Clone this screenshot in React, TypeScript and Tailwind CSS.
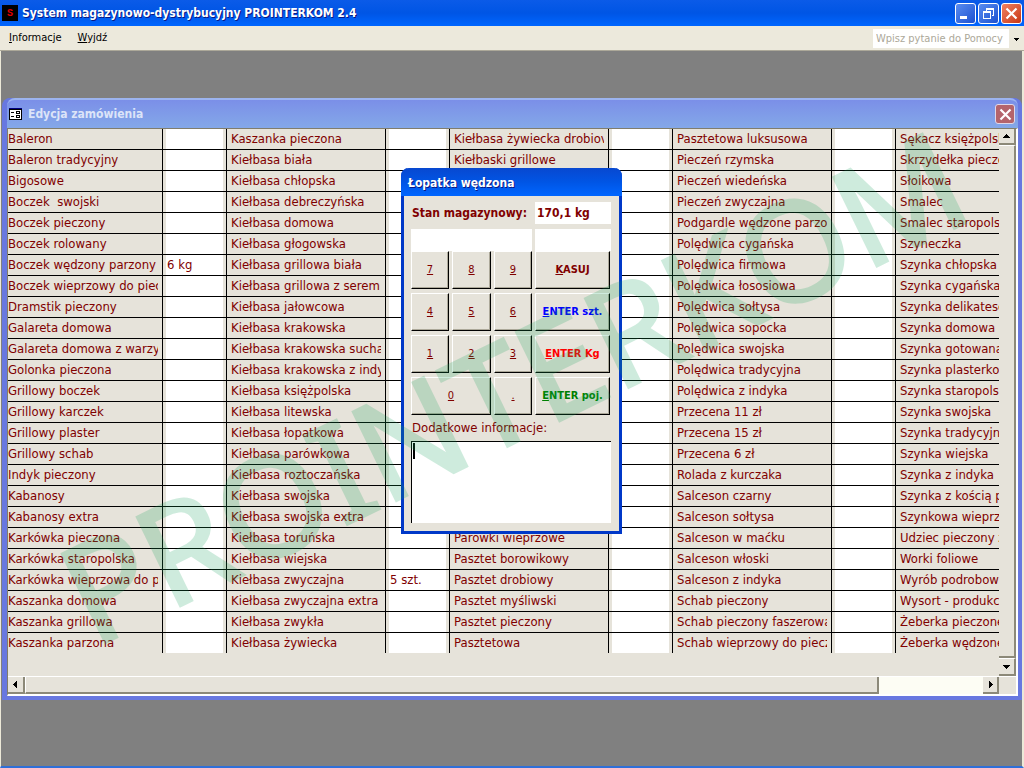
import { useState } from 'react'

const PRODUCTS = [
  ['Baleron', 'Baleron tradycyjny', 'Bigosowe', 'Boczek  swojski', 'Boczek pieczony', 'Boczek rolowany', 'Boczek wędzony parzony', 'Boczek wieprzowy do piec', 'Dramstik pieczony', 'Galareta domowa', 'Galareta domowa z warzy', 'Golonka pieczona', 'Grillowy boczek', 'Grillowy karczek', 'Grillowy plaster', 'Grillowy schab', 'Indyk pieczony', 'Kabanosy', 'Kabanosy extra', 'Karkówka pieczona', 'Karkówka staropolska', 'Karkówka wieprzowa do p', 'Kaszanka domowa', 'Kaszanka grillowa', 'Kaszanka parzona'],
  ['Kaszanka pieczona', 'Kiełbasa biała', 'Kiełbasa chłopska', 'Kiełbasa debreczyńska', 'Kiełbasa domowa', 'Kiełbasa głogowska', 'Kiełbasa grillowa biała', 'Kiełbasa grillowa z serem', 'Kiełbasa jałowcowa', 'Kiełbasa krakowska', 'Kiełbasa krakowska sucha', 'Kiełbasa krakowska z indy', 'Kiełbasa księżpolska', 'Kiełbasa litewska', 'Kiełbasa łopatkowa', 'Kiełbasa parówkowa', 'Kiełbasa roztoczańska', 'Kiełbasa swojska', 'Kiełbasa swojska extra', 'Kiełbasa toruńska', 'Kiełbasa wiejska', 'Kiełbasa zwyczajna', 'Kiełbasa zwyczajna extra', 'Kiełbasa zwykła', 'Kiełbasa żywiecka'],
  ['Kiełbasa żywiecka drobiov', 'Kiełbaski grillowe', '', '', '', '', '', '', '', '', '', '', '', '', '', '', '', '', '', 'Parówki wieprzowe', 'Pasztet borowikowy', 'Pasztet drobiowy', 'Pasztet myśliwski', 'Pasztet pieczony', 'Pasztetowa'],
  ['Pasztetowa luksusowa', 'Pieczeń rzymska', 'Pieczeń wiedeńska', 'Pieczeń zwyczajna', 'Podgardle wędzone parzo', 'Polędwica cygańska', 'Polędwica firmowa', 'Polędwica łososiowa', 'Polędwica sołtysa', 'Polędwica sopocka', 'Polędwica swojska', 'Polędwica tradycyjna', 'Polędwica z indyka', 'Przecena 11 zł', 'Przecena 15 zł', 'Przecena 6 zł', 'Rolada z kurczaka', 'Salceson czarny', 'Salceson sołtysa', 'Salceson w maćku', 'Salceson włoski', 'Salceson z indyka', 'Schab pieczony', 'Schab pieczony faszerowa', 'Schab wieprzowy do piecz'],
  ['Sękacz księżpolsk', 'Skrzydełka pieczo', 'Słoikowa', 'Smalec', 'Smalec staropols', 'Szyneczka', 'Szynka chłopska', 'Szynka cygańska', 'Szynka delikatesc', 'Szynka domowa', 'Szynka gotowana', 'Szynka plasterkov', 'Szynka staropolsk', 'Szynka swojska', 'Szynka tradycyjna', 'Szynka wiejska', 'Szynka z indyka', 'Szynka z kością p', 'Szynkowa wieprz', 'Udziec pieczony z', 'Worki foliowe', 'Wyrób podrobow', 'Wysort - produkc', 'Żeberka pieczone', 'Żeberka wędzone'],
]

const AMOUNTS: Record<string, string> = {
  'Boczek wędzony parzony': '6 kg',
  'Kiełbasa zwyczajna': '5 szt.',
}

const ROWS = PRODUCTS[0].map((_, i) => PRODUCTS.map((column) => column[i]))

const KEY =
  'flex items-center justify-center border border-t-white border-l-white border-r-black border-b-black bg-[#e6e3da] shadow-[inset_-1px_-1px_#aca899]'

function Arrow({ d }: { d: string }) {
  return (
    <svg width="9" height="9" viewBox="0 0 9 9" shapeRendering="crispEdges" aria-hidden="true">
      <path d={d} />
    </svg>
  )
}

function CloseIcon() {
  return (
    <svg width="13" height="13" viewBox="0 0 13 13" aria-hidden="true">
      <path d="M1.500 1.500l10 10M11.500 1.500l-10 10" stroke="#fff" strokeWidth="2.2" />
    </svg>
  )
}

function TitleBar() {
  const button =
    'flex size-[21px] items-center justify-center rounded-[3px] border border-white bg-linear-to-br from-[#5a8cf0] to-[#1c50d0]'
  return (
    <header className="flex h-[26px] shrink-0 items-center bg-linear-to-b from-[#0b5be8] via-[#0055e5] to-[#0066ff] px-[2px]">
      <span className="flex size-4 items-center justify-center bg-black font-['Liberation_Mono'] text-[10px] font-bold text-[#e00000]">
        S
      </span>
      <h1 className="ml-1 flex-1 text-[12px] font-bold text-white [text-shadow:1px_1px_#0a1883]">
        System magazynowo-dystrybucyjny PROINTERKOM 2.4
      </h1>
      <div className="flex gap-[2px]">
        <button className={button} aria-label="Minimalizuj">
          <svg width="13" height="13" viewBox="0 0 13 13" aria-hidden="true">
            <path d="M1 9h7v3H1z" fill="#fff" />
          </svg>
        </button>
        <button className={button} aria-label="Przywróć">
          <svg width="13" height="13" viewBox="0 0 13 13" fill="none" stroke="#fff" shapeRendering="crispEdges" aria-hidden="true">
            <path d="M4.500 4V2.500h7v6H10M4 1.500h8M1.500 5.500h7v6h-7zM1 4.500h8" />
          </svg>
        </button>
        <button
          className="flex size-[21px] items-center justify-center rounded-[3px] border border-white bg-linear-to-br from-[#f08060] to-[#c8340c]"
          aria-label="Zamknij"
        >
          <CloseIcon />
        </button>
      </div>
    </header>
  )
}

function MenuBar() {
  return (
    <nav className="flex h-[25px] shrink-0 items-center border-b border-[#aca899] bg-[#ece9dc] pl-[9px] text-[11px]">
      <a href="#info">
        <u>I</u>nformacje
      </a>
      <a href="#exit" className="ml-4 flex-1">
        <u>W</u>yjdź
      </a>
      <input
        className="h-[19px] w-[136px] bg-white px-[3px] placeholder:text-[#aca899]"
        placeholder="Wpisz pytanie do Pomocy"
        aria-label="Pytanie do Pomocy"
      />
      <button className="flex h-[19px] w-[15px] items-center justify-center" aria-label="Rozwiń">
        <Arrow d="M2 4h5v1H6v1H5v1H4V6H3V5H2z" />
      </button>
    </nav>
  )
}

function ProductTable() {
  return (
    <table className="w-full table-fixed border-separate border-spacing-0 text-[13px] leading-5 text-[#800000]">
      <colgroup>
        {PRODUCTS.map((_, i) => [
          <col key={`n${i}`} className={i === 0 ? 'w-[154px]' : i === 4 ? '' : 'w-[159px]'} />,
          i < 4 && <col key={`a${i}`} className="w-[64px]" />,
        ])}
      </colgroup>
      <tbody>
        {ROWS.map((row, r) => (
          <tr key={r} className="*:border-b *:border-black last:*:border-b-0">
            {row.map((name, c) => [
              <td key={`n${c}`} className={c === 0 ? 'p-0' : 'border-l p-0 pl-1'}>
                <div className={c === 4 ? 'h-5 overflow-hidden whitespace-pre' : 'h-5 w-[150px] overflow-hidden whitespace-pre'}>
                  {name}
                </div>
              </td>,
              c < 4 && (
                <td key={`a${c}`} className="border-l p-0 px-[3px]">
                  <input
                    className="block h-5 w-full bg-white pl-px"
                    defaultValue={AMOUNTS[name] ?? ''}
                    aria-label={`Ilość ${name}`}
                  />
                </td>
              ),
            ])}
          </tr>
        ))}
      </tbody>
    </table>
  )
}

function OrderWindow() {
  const scroll = 'flex shrink-0 items-center justify-center border-r-2 border-b-2 border-[#8c8979] bg-[#e6e3da]'
  return (
    <section className="mt-[47px] ml-px rounded-t-lg border-r-4 border-b-4 border-l-[5px] border-[#6878e0] bg-[#6878e0]">
      <header className="flex h-[30px] items-center rounded-t-lg border-t-2 border-[#9cb4f0] bg-linear-to-b from-[#7b8fe8] to-[#84a8e8] pr-[3px] pl-[2px]">
        <svg width="13" height="12" viewBox="0 0 13 12" shapeRendering="crispEdges" aria-hidden="true">
          <path d="M0 0h13v12H0z" />
          <path d="M1 2h11v9H1z" fill="#fff" />
          <path d="M2 4h3v1H2zM2 8h3v1H2zM7 3h4v3H7zM7 7h4v3H7z" />
          <path d="M8 4h2v1H8zM8 8h2v1H8z" fill="#fff" />
          <path d="M0 0h13v1H0z" fill="#000080" />
        </svg>
        <h2 className="ml-[6px] flex-1 text-[12px] font-bold text-[#dce4f8]">Edycja zamówienia</h2>
        <button
          className="flex size-5 items-center justify-center rounded-[3px] border border-[#e0d8e8] bg-[#b4646c]"
          aria-label="Zamknij okno"
        >
          <CloseIcon />
        </button>
      </header>
      <div className="border-t border-r-2 border-b-2 border-l border-[#807d6c] border-r-white border-b-white bg-[#e6e3da]">
        <div className="flex">
          <div className="min-w-0 flex-1 pb-[23px]">
            <ProductTable />
          </div>
          <div className="flex w-[17px] flex-col">
            <button className={`${scroll} h-4`} aria-label="W górę">
              <Arrow d="M4 2h1v1h1v1h1v1h1v1H1V5h1V4h1V3h1z" />
            </button>
            <div className={`${scroll} flex-1 border-t border-t-white`} />
            <button className={`${scroll} h-[18px] border-t border-t-white`} aria-label="W dół">
              <Arrow d="M1 3h7v1H7v1H6v1H5v1H4V6H3V5H2V4H1z" />
            </button>
          </div>
        </div>
        <div className="flex h-[18px] border-t border-white pr-[17px]">
          <button className={`${scroll} w-[17px]`} aria-label="W lewo">
            <Arrow d="M6 1v7H5V7H4V6H3V5H2V4h1V3h1V2h1V1z" />
          </button>
          <div className={`${scroll} flex-1 border-l border-l-white`} />
          <div className="w-[104px] bg-[#fdfdf4]" />
          <button className={`${scroll} w-4`} aria-label="W prawo">
            <Arrow d="M3 1v7h1V7h1V6h1V5h1V4H6V3H5V2H4V1z" />
          </button>
        </div>
      </div>
    </section>
  )
}

function Digit({ value, wide, onPress }: { value: string; wide?: boolean; onPress: (v: string) => void }) {
  return (
    <button className={wide ? `${KEY} col-span-2` : KEY} onClick={() => onPress(value)}>
      <u>{value}</u>
    </button>
  )
}

function StockDialog() {
  const [amount, setAmount] = useState('')
  const press = (v: string) => setAmount(amount + v)

  return (
    <section
      role="dialog"
      aria-label="Łopatka wędzona"
      className="absolute top-[168px] left-[401px] w-[221px] rounded-t-lg border-x-[3px] border-b-[3px] border-[#0038c8] bg-[#e6e3da] text-[#800000]"
    >
      <h2 className="-mx-[3px] h-7 rounded-t-lg bg-linear-to-b from-[#0848d0] via-[#0055e5] to-[#0066ff] pl-[7px] text-[12px] leading-[30px] font-bold text-white [text-shadow:1px_1px_#0a1883]">
        Łopatka wędzona
      </h2>
      <div className="pt-[6px] pr-2 pb-2 pl-[7px]">
        <div className="flex h-[22px] items-center text-[12px] font-bold">
          <label htmlFor="stock" className="flex-1 pl-px whitespace-nowrap">
            Stan magazynowy:
          </label>
          <input id="stock" className="h-full w-[76px] bg-white pl-[2px]" defaultValue="170,1 kg" />
        </div>
        <div className="mt-[5px] flex h-[22px] gap-[3px]">
          <input className="min-w-0 flex-1 bg-white pl-1" value={amount} readOnly aria-label="Ilość" />
          <input className="w-[76px] bg-white pl-1" aria-label="Jednostka" />
        </div>
        <div className="grid auto-rows-[38px] grid-cols-[38px_39px_38px_75px] gap-x-[3px] gap-y-1 text-[11px]">
          <Digit value="7" onPress={press} />
          <Digit value="8" onPress={press} />
          <Digit value="9" onPress={press} />
          <button className={`${KEY} font-bold`} onClick={() => setAmount('')}>
            <u>K</u>ASUJ
          </button>
          <Digit value="4" onPress={press} />
          <Digit value="5" onPress={press} />
          <Digit value="6" onPress={press} />
          <button className={`${KEY} font-bold text-[#0000ff]`}>
            <u>E</u>NTER szt.
          </button>
          <Digit value="1" onPress={press} />
          <Digit value="2" onPress={press} />
          <Digit value="3" onPress={press} />
          <button className={`${KEY} font-bold text-[#ff0000]`}>
            <u>E</u>NTER Kg
          </button>
          <Digit value="0" wide onPress={press} />
          <Digit value="." onPress={press} />
          <button className={`${KEY} font-bold text-[#008000]`}>
            <u>E</u>NTER poj.
          </button>
        </div>
        <label htmlFor="notes" className="mt-[3px] block pl-px text-[13px] leading-5">
          Dodatkowe informacje:
        </label>
        <div className="mt-[3px] flex border-t border-l border-black bg-white pt-px pl-px">
          <span className="h-4 w-[2px] bg-black" />
          <textarea id="notes" className="block h-20 min-w-0 flex-1 resize-none" />
        </div>
      </div>
    </section>
  )
}

export default function App() {
  return (
    <div className="relative flex min-h-screen flex-col overflow-hidden bg-[#808080] font-['DejaVu_Sans_Condensed','DejaVu_Sans',sans-serif]">
      <TitleBar />
      <MenuBar />
      <main className="flex-1 border-r-2 border-b-2 border-l border-[#ece9d8] border-b-[#2f6fd8]">
        <OrderWindow />
      </main>
      <StockDialog />
      <div className="pointer-events-none absolute inset-0 flex items-center justify-center">
        <span className="-rotate-[26deg] font-['Noto_Sans',sans-serif] text-[138px] leading-none text-[#10a058] opacity-20 [-webkit-text-stroke:3px_#10a058]">
          PROINTERKOM
        </span>
      </div>
    </div>
  )
}
